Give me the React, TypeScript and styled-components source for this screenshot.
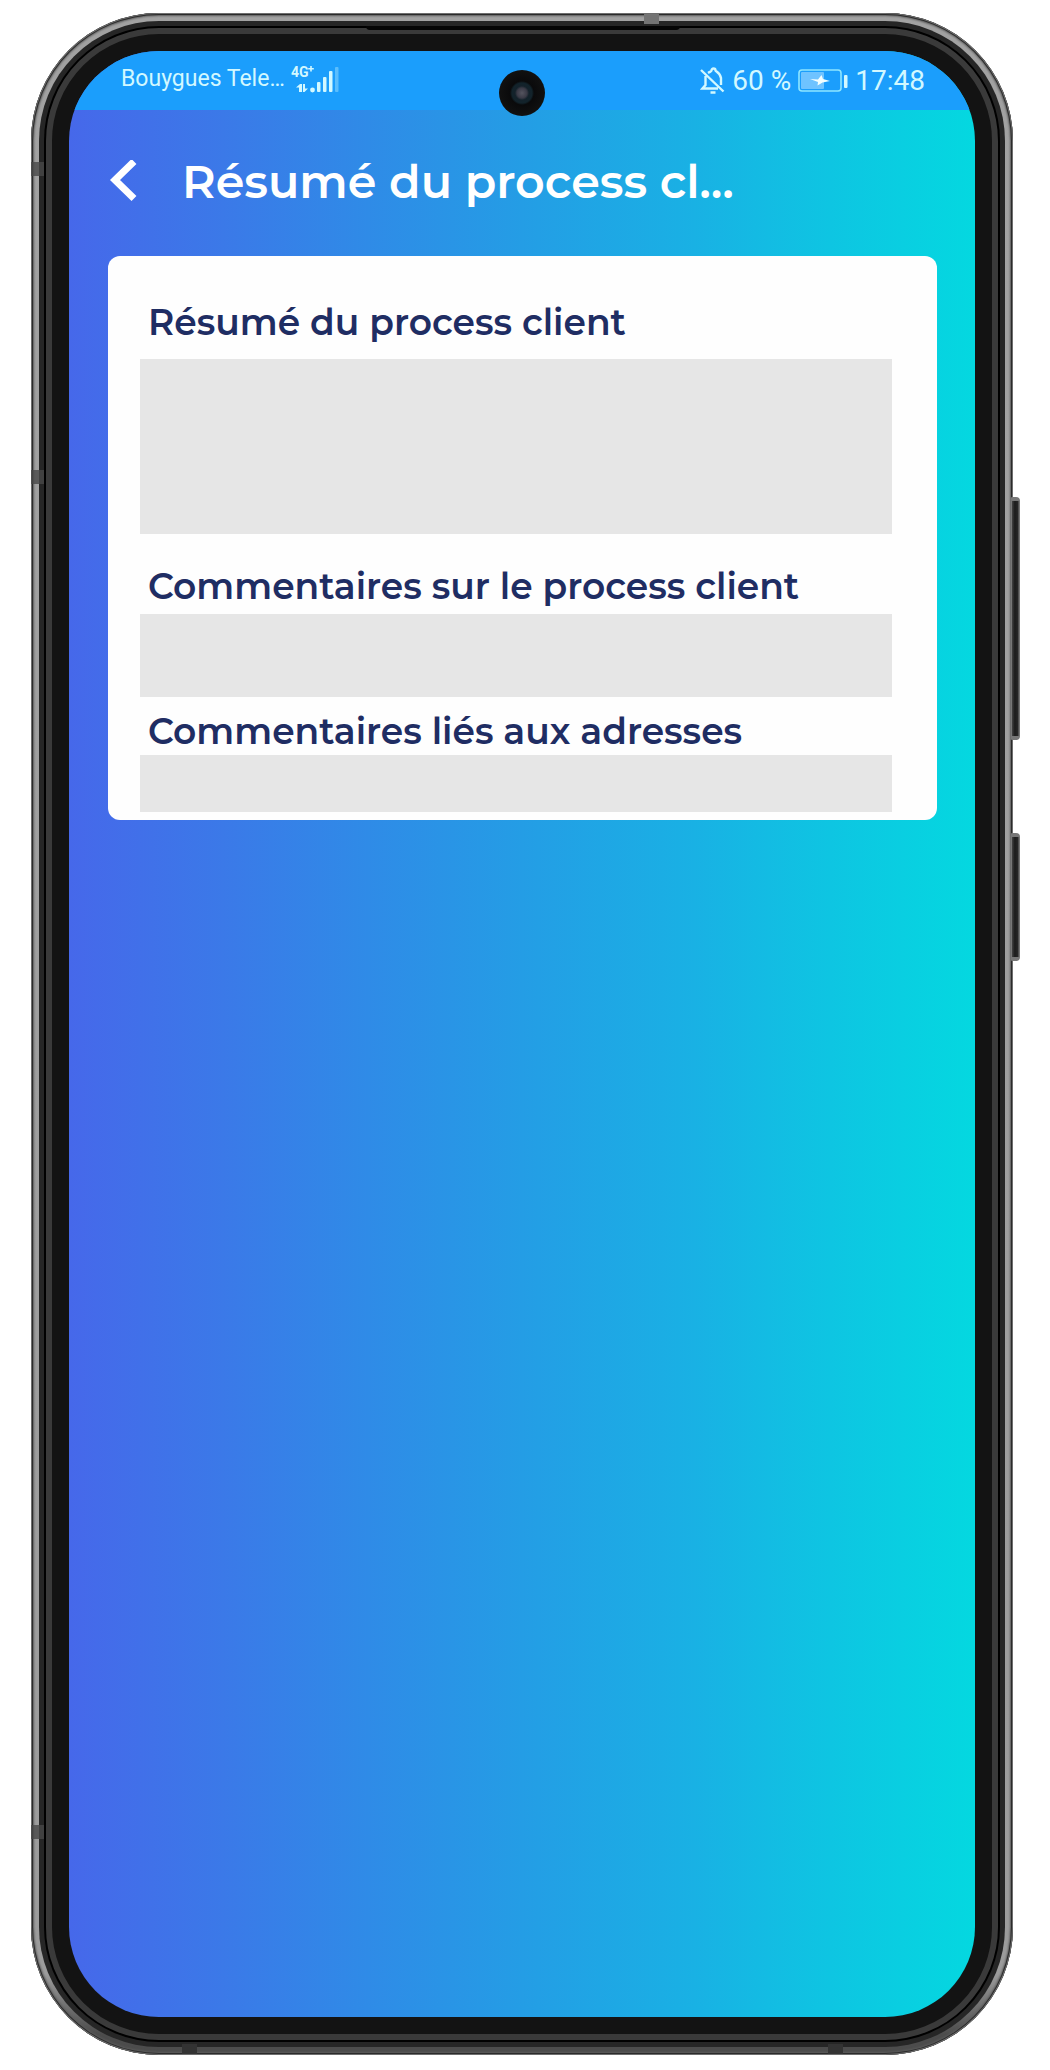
import React from "react";
import styled, { createGlobalStyle } from "styled-components";

const GlobalStyle = createGlobalStyle`
  *, *::before, *::after { box-sizing: border-box; }
  body { margin: 0; background: #ffffff; }
`;

const headingFont = `Montserrat, Inter, "Noto Sans", sans-serif`;
const systemFont = `Roboto, "Noto Sans", sans-serif`;

const Page = styled.div`
  display: flex;
  min-height: 100vh;
  padding: 13px 37px 15px 31px;
`;

const Metal = styled.div`
  position: relative;
  display: flex;
  flex: 1;
  min-width: 0;
  padding: 8px;
  border-radius: 128px;
  background: linear-gradient(to bottom, #a2a2a2 0%, #9c9c9c 96%, #4c4c4c 99%, #4c4c4c 100%);
  box-shadow: inset 0 0 0 1px #6e6e6e, inset 0 0 0 2px #2b2b2b, inset 0 0 2px 3px #5a5a5a;
`;

const Seam = styled.div`
  display: flex;
  flex: 1;
  min-width: 0;
  padding: 5px;
  border-radius: 120px;
  background: #262626;
`;

const Gasket = styled.div`
  display: flex;
  flex: 1;
  min-width: 0;
  padding: 2px;
  border-radius: 115px;
  background: #000000;
`;

const Bezel = styled.div`
  display: flex;
  flex: 1;
  min-width: 0;
  padding: 17px;
  border: 6px solid #3a3a3a;
  border-radius: 113px;
  background: #131313;
`;

const Speaker = styled.div`
  position: absolute;
  top: 13px;
  left: 335px;
  right: 333px;
  height: 4px;
  border-radius: 0 0 4px 4px;
  background: #050505;
`;

const SideBand = styled.div<{ $top: number }>`
  position: absolute;
  left: 0;
  top: ${(p) => p.$top}px;
  width: 13px;
  height: 14px;
  background: rgba(72, 72, 72, 0.8);
`;

const EdgeBand = styled.div<{ $edge: "top" | "bottom"; $right: number }>`
  position: absolute;
  ${(p) => p.$edge}: 1px;
  right: ${(p) => p.$right}px;
  width: 15px;
  height: 10px;
  background: ${(p) => (p.$edge === "top" ? "#747474" : "#333333")};
`;

const SideKey = styled.div<{ $top: number; $height: number }>`
  position: absolute;
  right: -7px;
  top: ${(p) => p.$top}px;
  width: 9px;
  height: ${(p) => p.$height}px;
  border: 1px solid #777777;
  border-width: 4px 1px 4px 1px;
  border-radius: 1px 4px 4px 1px;
  background: linear-gradient(to right, #444444, #1c1c1c 40%, #262626 80%, #666666);
`;

const Screen = styled.main`
  position: relative;
  flex: 1;
  min-width: 0;
  overflow: hidden;
  border-radius: 90px;
  background: linear-gradient(
    to right,
    #4668ea 0%,
    #3b79e8 17%,
    #2f8be7 33%,
    #249de5 50%,
    #19b1e4 69%,
    #0ec5e2 84%,
    #04d8e0 100%
  );
`;

const StatusBar = styled.div`
  display: flex;
  align-items: center;
  justify-content: space-between;
  height: 59px;
  padding: 0 50px 3px 52px;
  background: #1b9efc;
  color: #d2f8ff;
  font-family: ${systemFont};
`;

const StatusGroup = styled.div<{ $gap: number; $drop?: number }>`
  display: flex;
  align-items: center;
  gap: ${(p) => p.$gap}px;
  padding-top: ${(p) => p.$drop ?? 0}px;
`;

const Carrier = styled.span`
  font-size: 23px;
  line-height: 28px;
`;

const StatusText = styled.span`
  font-size: 28px;
  line-height: 32px;
`;

const Camera = styled.div`
  position: absolute;
  top: 19px;
  left: 50%;
  width: 46px;
  height: 46px;
  margin-left: -23px;
  border-radius: 50%;
  background: radial-gradient(circle at 50% 50%, #55545f 0, #3a3a46 5px, #14222b 7px, #12232b 10px, #0a0a0b 12px, #111111 23px);
`;

const Header = styled.header`
  display: flex;
  align-items: center;
  gap: 43px;
  padding: 42px 40px 44px;
`;

const BackButton = styled.button`
  display: flex;
  padding: 0;
  border: 0;
  background: none;
  color: #ffffff;
  cursor: pointer;
`;

const Title = styled.h1`
  margin: 0;
  color: #ffffff;
  font-family: ${headingFont};
  font-size: 46px;
  font-weight: 600;
  line-height: 60px;
  white-space: nowrap;
`;

const Card = styled.article`
  margin: 0 38px 0 39px;
  padding: 42px 45px 8px 32px;
  border-radius: 12px;
  background: #fefefe;
`;

const Section = styled.section<{ $before: number }>`
  padding-top: ${(p) => p.$before}px;
`;

const SectionTitle = styled.h2<{ $after: number }>`
  margin: 0 0 ${(p) => p.$after}px;
  padding-left: 8px;
  color: #1f2d63;
  font-family: ${headingFont};
  font-size: 36px;
  font-weight: 600;
  line-height: 48px;
  white-space: nowrap;
`;

const Redacted = styled.div<{ $height: number }>`
  height: ${(p) => p.$height}px;
  background: #e6e6e6;
`;

const SignalIcon = () => (
  <svg width="48" height="28" viewBox="0 0 48 28" fill="currentColor" aria-label="4G+">
    <text x="0" y="12" fontFamily="Roboto, sans-serif" fontSize="14" fontWeight="700">4G</text>
    <path d="M19.200 1h1.600v2h2v1.600h-2v2h-1.600v-2h-2V3h2z" />
    <path d="M5 22.500l4-3.500h2V27H8v-4.500zM12 19h2v4.500h3L13.500 27H12z" />
    <circle cx="21.500" cy="25" r="2.400" />
    <rect x="26" y="17" width="3.500" height="10" rx="1" />
    <rect x="32" y="12" width="3.500" height="15" rx="1" />
    <rect x="38" y="6" width="3.500" height="21" rx="1" />
    <rect x="44" y="2" width="3.500" height="25" rx="1" opacity="0.350" />
  </svg>
);

const MutedBellIcon = () => (
  <svg width="25" height="28" viewBox="0 0 25 28" fill="none" stroke="currentColor" strokeWidth="2.400" aria-hidden="true">
    <path d="M8 6C10.500 4.500 11.500 4.500 11.500 3.500a2 2 0 0 1 4 0c0 1 4.500 2 5.500 7.500v7" />
    <path d="M5.500 9v9L2.500 21.500H18M1 3l22.500 21.500" />
    <path d="M10.500 25.500h5" strokeWidth="2.600" />
  </svg>
);

const BatteryIcon = () => (
  <svg width="50" height="24" viewBox="0 0 50 24" aria-hidden="true">
    <rect x="1" y="1" width="42" height="21" rx="3" fill="none" stroke="#8fe6ff" strokeWidth="1.600" />
    <rect x="3" y="3" width="23" height="17" rx="1" fill="#6fc3ff" />
    <path d="M12 10l8 .5 3.500-4.500 1.500 4 7 2-7.500 1.500-5 3 .5-3.500z" fill="#f4ffff" />
    <rect x="46" y="6" width="3.500" height="13" rx="1" fill="#d2f8ff" />
  </svg>
);

const BackIcon = () => (
  <svg width="30" height="44" viewBox="0 0 30 44" fill="none" stroke="currentColor" strokeWidth="7" aria-hidden="true">
    <path d="M25 1.500L6 20l19 18.500" />
  </svg>
);

const sections = [
  { title: "Résumé du process client", before: 0, after: 13, height: 175 },
  { title: "Commentaires sur le process client", before: 28, after: 4, height: 83 },
  { title: "Commentaires liés aux adresses", before: 10, after: 0, height: 57 },
];

export default function App() {
  return (
    <>
      <GlobalStyle />
      <Page>
        <Metal>
          <SideKey $top={484} $height={243} />
          <SideKey $top={820} $height={128} />
          <Seam>
            <Gasket>
              <Bezel>
                <Screen>
                  <StatusBar>
                    <StatusGroup $gap={6}>
                      <Carrier>Bouygues Tele…</Carrier>
                      <SignalIcon />
                    </StatusGroup>
                    <StatusGroup $gap={7} $drop={4}>
                      <MutedBellIcon />
                      <StatusText>60 %</StatusText>
                      <BatteryIcon />
                      <StatusText>17:48</StatusText>
                    </StatusGroup>
                  </StatusBar>
                  <Header>
                    <BackButton type="button" aria-label="Retour">
                      <BackIcon />
                    </BackButton>
                    <Title>Résumé du process cl…</Title>
                  </Header>
                  <Card>
                    {sections.map((s) => (
                      <Section key={s.title} $before={s.before}>
                        <SectionTitle $after={s.after}>{s.title}</SectionTitle>
                        <Redacted $height={s.height} />
                      </Section>
                    ))}
                  </Card>
                  <Camera />
                </Screen>
              </Bezel>
            </Gasket>
          </Seam>
          <Speaker />
          <SideBand $top={149} />
          <SideBand $top={457} />
          <SideBand $top={1812} />
          <EdgeBand $edge="top" $right={354} />
          <EdgeBand $edge="bottom" $right={816} />
          <EdgeBand $edge="bottom" $right={170} />
        </Metal>
      </Page>
    </>
  );
}
